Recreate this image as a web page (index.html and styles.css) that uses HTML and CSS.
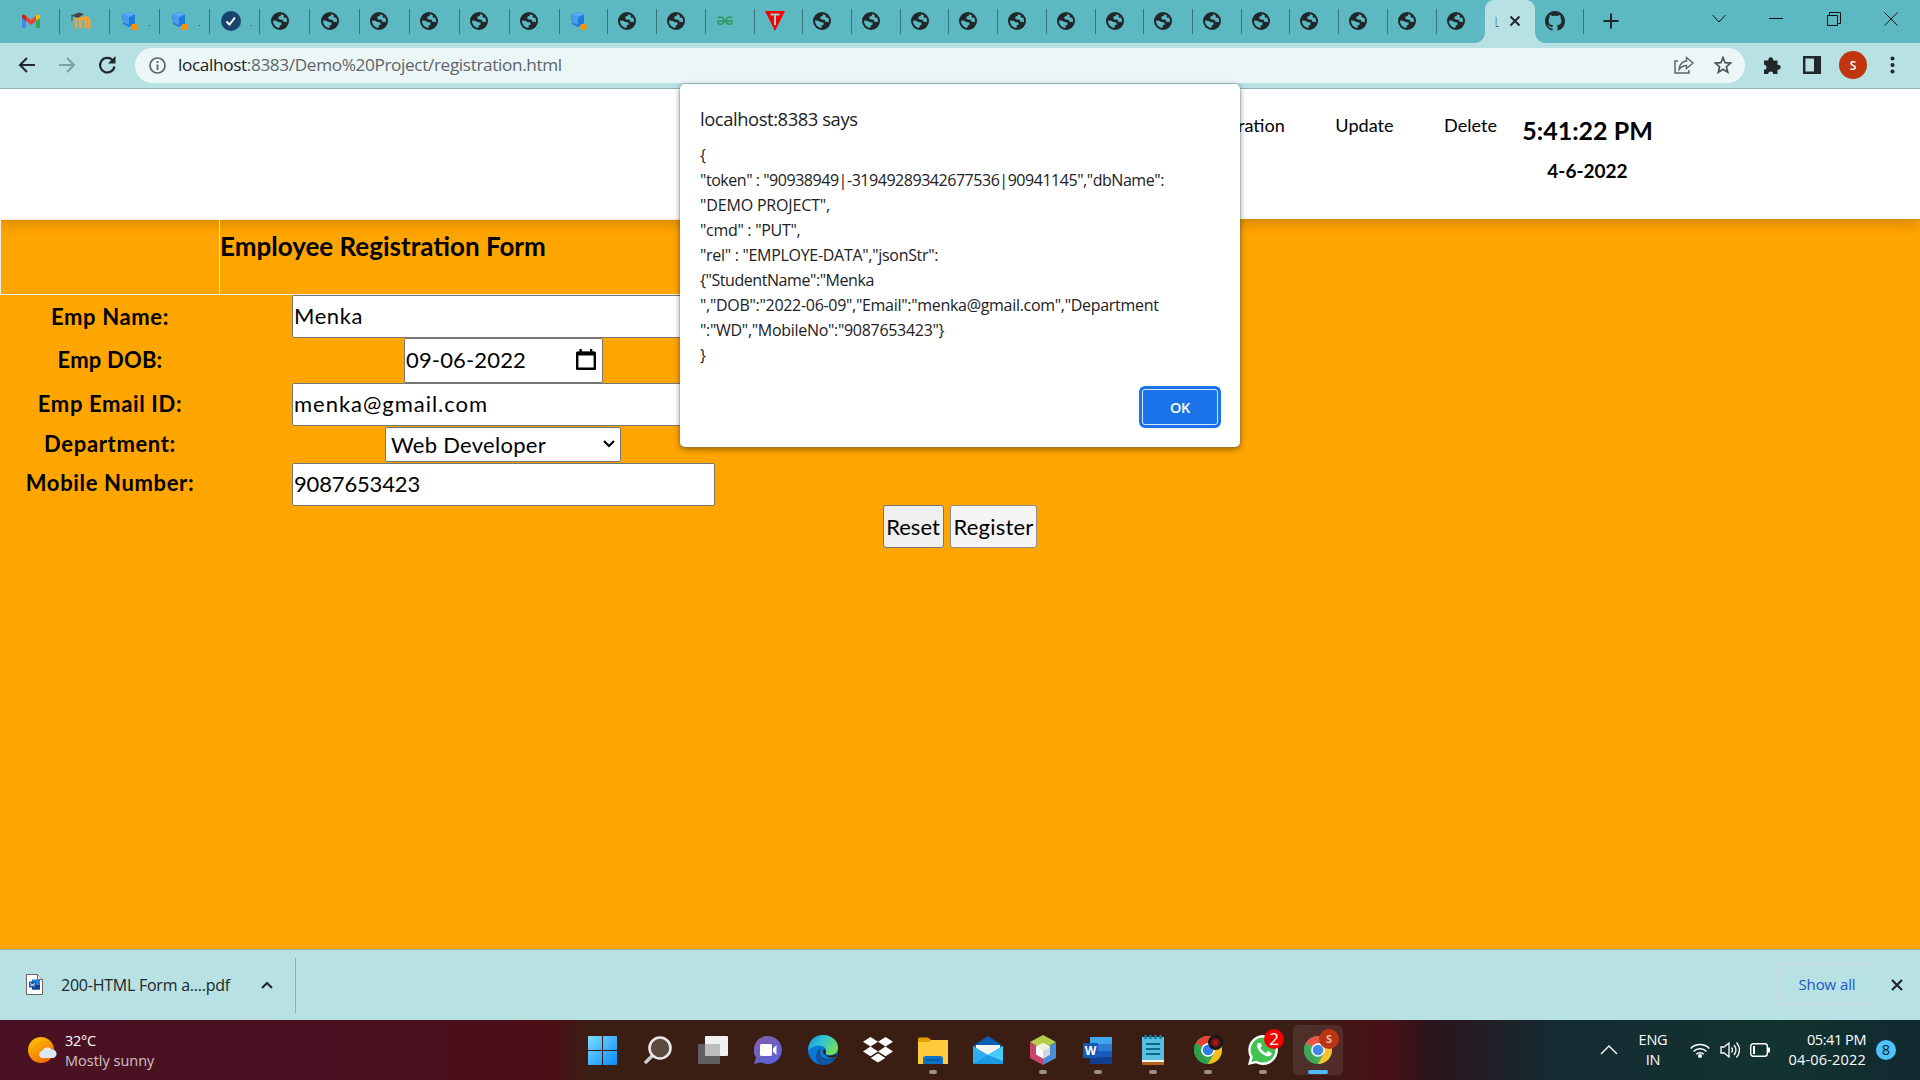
FILE: index.html
```html
<!DOCTYPE html>
<html lang="en">
<head>
<meta charset="utf-8">
<title>Employee Registration Form</title>
<link rel="stylesheet" href="styles.css">
</head>
<body>
<svg class="defs" aria-hidden="true">
  <defs>
    <symbol id="globe" viewBox="0 0 18 18"><circle cx="9" cy="9" r="9" fill="#202629"/><path d="M10.2 2.2 9.6 4 7.6 4.6 7.2 6.8 9 7.4 12 8 12.4 10 14.6 9.8 15.8 10.4A7 7 0 0 0 15 5.2L13.6 6 12.6 4.6 13 3.4A7 7 0 0 0 10.2 2.2ZM2 8.4A7 7 0 0 0 8.4 16L8.8 13.6 10.8 12.6 10.4 10.6 7.4 10 5.4 8.8Z" fill="#5db8c0"/></symbol>
    <symbol id="cube" viewBox="0 0 18 18"><path d="M1 3Q4 .5 7.500.500T14 2.500v9L8 15l-6-3Z" fill="#1c7cdc"/><path d="M1 3Q4 .5 7.500.500T14 2.500L8 5Z" fill="#5aa9f2"/><path d="m1.500 3 6.500 2v8l-6-2.500Z" fill="#4a9bea"/><rect x="10.500" y="12" width="6" height="6" rx="1" fill="#ff9100"/></symbol>
    <symbol id="chrome" viewBox="0 0 28 28"><circle cx="14" cy="14" r="14" fill="#34a853"/><path d="M14 14 1.9 7A14 14 0 0 1 26.1 7Z" fill="#ea4335"/><path d="M14 7h12.1A14 14 0 0 1 14 28l6-10.5Z" fill="#fbbc16"/><path d="m1.9 7 6 10.5L14 28A14 14 0 0 1 1.9 7Z" fill="#2f9e4b"/><circle cx="14" cy="14" r="6.8" fill="#fff"/><circle cx="14" cy="14" r="5.3" fill="#2f7de9"/></symbol>
  </defs>
</svg>

<div class="tabstrip">
  <div class="tab"><svg width="20" height="15" viewBox="0 0 20 15"><path d="M1 2v12h4V6z" fill="#4285f4"/><path d="M15 6v8h4V2z" fill="#34a853"/><path d="M15 1.5V7l4-3V2c0-2-2-2-4-.5z" fill="#fbbc04"/><path d="M5 7V2l5 4 5-4v5l-5 4z" fill="#ea4335"/><path d="M1 2v2l4 3V2C3 0 1 0 1 2z" fill="#c5221f"/></svg></div>
  <div class="tab"><svg width="20" height="18" viewBox="0 0 20 18"><path d="M5 16.500V9c0-3.500 4.500-3.500 4.500 0v7.500m0-7.500c.5-4 5.500-4 5.500 0v7.500m0-7.500" fill="none" stroke="#f9a12e" stroke-width="2.800"/><path d="M14 6c3-1 4.500.5 4.500 3v7.500" fill="none" stroke="#f9a12e" stroke-width="2.400"/><path d="m0 3.500 8-3 5 1.500-6 4z" fill="#444"/><path d="M1 3v6" stroke="#444"/></svg></div>
  <div class="tab dotted"><svg width="18" height="18"><use href="#cube"/></svg></div>
  <div class="tab dotted"><svg width="18" height="18"><use href="#cube"/></svg></div>
  <div class="tab dotted"><svg width="20" height="20" viewBox="0 0 20 20"><circle cx="10" cy="10" r="10" fill="#1b4370"/><path d="m5.5 10.500 3 3 5.500-7" fill="none" stroke="#fff" stroke-width="2"/></svg></div>
  <div class="tab"><svg width="18" height="18"><use href="#globe"/></svg></div>
  <div class="tab"><svg width="18" height="18"><use href="#globe"/></svg></div>
  <div class="tab"><svg width="18" height="18"><use href="#globe"/></svg></div>
  <div class="tab"><svg width="18" height="18"><use href="#globe"/></svg></div>
  <div class="tab"><svg width="18" height="18"><use href="#globe"/></svg></div>
  <div class="tab"><svg width="18" height="18"><use href="#globe"/></svg></div>
  <div class="tab slim"><svg width="18" height="18"><use href="#cube"/></svg></div>
  <div class="tab slim"><svg width="18" height="18"><use href="#globe"/></svg></div>
  <div class="tab slim"><svg width="18" height="18"><use href="#globe"/></svg></div>
  <div class="tab slim"><svg width="18" height="10" viewBox="0 0 18 10"><path d="M1 5h16M2 2c3-2 6 0 6 3S3 10 2 6m14-4c-3-2-6 0-6 3s5 5 6 1" fill="none" stroke="#2f9a5f" stroke-width="1.700"/></svg></div>
  <div class="tab slim"><svg width="20" height="20" viewBox="0 0 20 20"><path d="M0 0h20L10 20Z" fill="#f00"/><path d="M5.500 3.500h9M10 3.500V14" stroke="#8fd0d6" stroke-width="2"/></svg></div>
  <div class="tab slim"><svg width="18" height="18"><use href="#globe"/></svg></div>
  <div class="tab slim"><svg width="18" height="18"><use href="#globe"/></svg></div>
  <div class="tab slim"><svg width="18" height="18"><use href="#globe"/></svg></div>
  <div class="tab slim"><svg width="18" height="18"><use href="#globe"/></svg></div>
  <div class="tab slim"><svg width="18" height="18"><use href="#globe"/></svg></div>
  <div class="tab slim"><svg width="18" height="18"><use href="#globe"/></svg></div>
  <div class="tab slim"><svg width="18" height="18"><use href="#globe"/></svg></div>
  <div class="tab slim"><svg width="18" height="18"><use href="#globe"/></svg></div>
  <div class="tab slim"><svg width="18" height="18"><use href="#globe"/></svg></div>
  <div class="tab slim"><svg width="18" height="18"><use href="#globe"/></svg></div>
  <div class="tab slim"><svg width="18" height="18"><use href="#globe"/></svg></div>
  <div class="tab slim"><svg width="18" height="18"><use href="#globe"/></svg></div>
  <div class="tab slim"><svg width="18" height="18"><use href="#globe"/></svg></div>
  <div class="tab slim last"><svg width="18" height="18"><use href="#globe"/></svg></div>
  <div class="tab-active"><span class="tab-title">L</span><svg width="12" height="12" viewBox="0 0 12 12"><path d="m1.500 1.500 9 9m0-9-9 9" stroke="#202629" stroke-width="2"/></svg></div>
  <div class="tab slim"><svg width="20" height="20" viewBox="0 0 16 16"><path fill="#202b30" d="M8 0C3.580 0 0 3.580 0 8c0 3.540 2.290 6.530 5.470 7.590.4.070.55-.17.55-.38 0-.19-.01-.82-.01-1.490-2.010.37-2.530-.49-2.690-.94-.09-.23-.48-.94-.82-1.130-.28-.15-.68-.52-.01-.53.63-.01 1.080.58 1.230.82.72 1.210 1.870.87 2.330.66.07-.52.28-.87.51-1.070-1.780-.2-3.640-.89-3.640-3.950 0-.87.31-1.590.82-2.150-.08-.2-.36-1.020.08-2.120 0 0 .67-.21 2.200.82.64-.18 1.320-.27 2-.27s1.360.09 2 .27c1.530-1.040 2.200-.82 2.200-.82.44 1.100.16 1.920.08 2.120.51.56.82 1.270.82 2.150 0 3.070-1.870 3.750-3.650 3.950.29.25.54.73.54 1.480 0 1.070-.01 1.930-.01 2.200 0 .21.15.46.55.38A8.010 8.010 0 0 0 16 8c0-4.420-3.580-8-8-8Z"/></svg></div>
  <svg class="newtab" width="16" height="16" viewBox="0 0 16 16"><path d="M8 0.500v15M.5 8h15" stroke="#202629" stroke-width="2"/></svg>
  <div class="wincontrols">
    <svg width="14" height="9" viewBox="0 0 14 9"><path d="m.5 1 6.500 7 6.500-7" fill="none" stroke="#111"/></svg>
    <svg width="14" height="9" viewBox="0 0 14 9"><path d="M0 4.500h14" stroke="#111"/></svg>
    <svg width="14" height="14" viewBox="0 0 14 14"><path d="M.5 3.500h10v10H.5zM2.500 3V.5h11v11H11" fill="none" stroke="#111"/></svg>
    <svg width="14" height="14" viewBox="0 0 14 14"><path d="m.5.5 13 13m0-13-13 13" stroke="#111"/></svg>
  </div>
</div>

<div class="toolbar">
  <svg class="nav" width="40" height="20" viewBox="0 0 40 20"><path d="M28 10H13m7-7-7 7 7 7" fill="none" stroke="#202629" stroke-width="2"/></svg>
  <svg class="nav" width="40" height="20" viewBox="0 0 40 20"><path d="M12 10h15m-7-7 7 7-7 7" fill="none" stroke="#7e9ea2" stroke-width="2"/></svg>
  <svg class="nav" width="40" height="20" viewBox="0 0 40 20"><path d="M27.500 11.500A7.300 7.300 0 1 1 25.500 5" fill="none" stroke="#202629" stroke-width="2.200"/><path d="M28.500 1v7.500H21z" fill="#202629"/></svg>
  <div class="omnibox">
    <svg width="17" height="17" viewBox="0 0 17 17"><circle cx="8.500" cy="8.500" r="7.500" fill="none" stroke="#5f6368" stroke-width="1.700"/><path d="M8.500 7.500V13M8.500 4v2" stroke="#5f6368" stroke-width="1.800"/></svg>
    <span class="url"><b>localhost</b>:8383/Demo%20Project/registration.html</span>
    <svg class="share" width="20" height="18" viewBox="0 0 20 18"><path d="M4 5H1v12h14v-3" fill="none" stroke="#5f6368" stroke-width="1.500"/><path d="M12.500 1.500 19 7l-6.500 5.500V9.500C9 9.500 7 11 5 13.500 5.500 9 8 5.500 12.500 5Z" fill="none" stroke="#5f6368" stroke-width="1.400"/></svg>
    <svg width="18" height="18" viewBox="0 0 18 18"><path d="m9 1.500 2.100 5.200 5.500.4-4.200 3.600 1.300 5.500L9 13.200l-4.700 3 1.300-5.500L1.400 7.100l5.500-.4Z" fill="none" stroke="#4c5257" stroke-width="1.700"/></svg>
  </div>
  <svg class="ext" width="19" height="19" viewBox="0 0 19 19"><path d="M1 4.500h4.500a2.400 2.400 0 1 1 4.500 0h4.500V9a2.400 2.400 0 1 1 0 4.500V18h-4.300a2.500 2.500 0 0 0-5 0H1v-4.300a2.500 2.500 0 0 0 0-5Z" fill="#202629"/></svg>
  <svg class="panel" width="18" height="18" viewBox="0 0 18 18"><path d="M1.200 1.200h15.600v15.600H1.200z" fill="none" stroke="#202629" stroke-width="2.400"/><path d="M11 1h6v16h-6z" fill="#202629"/></svg>
  <span class="avatar">S</span>
  <svg class="dots" width="5" height="18" viewBox="0 0 5 18"><g fill="#202629"><circle cx="2.500" cy="2.500" r="2"/><circle cx="2.500" cy="9" r="2"/><circle cx="2.500" cy="15.500" r="2"/></g></svg>
</div>

<main class="page">
  <header class="site-header">
    <nav class="menu">
      <span>Registration</span>
      <span>Update</span>
      <span>Delete</span>
    </nav>
    <div class="clock">
      <div class="time">5:41:22 PM</div>
      <div class="date">4-6-2022</div>
    </div>
  </header>
  <section class="form">
    <div class="title-row">
      <div class="title-gap"></div>
      <h1>Employee Registration Form</h1>
    </div>
    <div class="row r1"><label>Emp Name:</label><div class="cell"><div class="field wide name">Menka</div></div></div>
    <div class="row r2"><label class="tight">Emp DOB:</label><div class="cell"><div class="field dob"><span>09-06-2022</span><svg width="20" height="21" viewBox="0 0 20 21"><path d="M1.200 4h17.600v15.800H1.200z" fill="none" stroke="#000" stroke-width="2.400" stroke-linejoin="round"/><path d="M1 2.500h18v4H1zM3.500 0h2.300v3H3.500zm10.500 0h2.300v3H14z"/></svg></div></div></div>
    <div class="row r3"><label>Emp Email ID:</label><div class="cell"><div class="field wide email">menka@gmail.com</div></div></div>
    <div class="row r4"><label>Department:</label><div class="cell"><div class="field dept"><span>Web Developer</span><svg width="12" height="8" viewBox="0 0 12 8"><path d="m1 1 5 5 5-5" fill="none" stroke="#000" stroke-width="2.200"/></svg></div></div></div>
    <div class="row r5"><label>Mobile Number:</label><div class="cell"><div class="field wide mobile">9087653423</div></div></div>
    <div class="actions"><button class="reset">Reset</button><button class="register">Register</button></div>
  </section>
</main>

<div class="shelf">
  <svg class="file" width="17" height="21" viewBox="0 0 17 21"><path d="M.5.5h11l5 5v15H.5z" fill="#fff" stroke="#666"/><path d="M11.500.5v5h5" fill="#eee" stroke="#666"/><rect x="6" y="5.500" width="8" height="10" fill="#1b84dd"/><rect x="6" y="11" width="8" height="4.500" fill="#123f8c"/><rect x="3" y="7.500" width="7" height="6" fill="#1c55b0"/><path d="m4.500 9 1 3 1-2 1 2 1-3" fill="none" stroke="#fff" stroke-width=".8"/></svg>
  <span class="filename">200-HTML Form a....pdf</span>
  <svg class="up" width="12" height="8" viewBox="0 0 12 8"><path d="m1 7 5-5 5 5" fill="none" stroke="#202629" stroke-width="2"/></svg>
  <i class="divider"></i>
  <button class="showall">Show all</button>
  <svg width="12" height="12" viewBox="0 0 12 12"><path d="m1 1 10 10M11 1 1 11" stroke="#202629" stroke-width="2.200"/></svg>
</div>

<footer class="taskbar">
  <div class="weather">
    <svg width="29" height="27" viewBox="0 0 29 27"><defs><linearGradient id="sun" x2=".6" y2="1"><stop stop-color="#ffc800"/><stop offset="1" stop-color="#f07000"/></linearGradient></defs><circle cx="13" cy="13" r="13" fill="url(#sun)"/><path d="M14 21a3.600 3.600 0 0 1 0-7 5.500 5.500 0 0 1 9.500-1.500A4.300 4.300 0 0 1 25 21Z" fill="#dce6f5"/></svg>
    <div class="stack"><span class="temp">32°C</span><span class="sky">Mostly sunny</span></div>
  </div>
  <div class="apps">
    <div class="app"><svg width="29" height="29" viewBox="0 0 29 29"><defs><linearGradient id="win" x2="1" y2="1"><stop stop-color="#7ddcff"/><stop offset="1" stop-color="#0a8cff"/></linearGradient></defs><path d="M0 1a1 1 0 0 1 1-1h13v14H0zM15 0h13a1 1 0 0 1 1 1v13H15zM0 15h14v14H1a1 1 0 0 1-1-1zM15 15h14v13a1 1 0 0 1-1 1H15z" fill="url(#win)"/></svg></div>
    <div class="app"><svg width="28" height="28" viewBox="0 0 28 28"><path d="m9 19-7 7" stroke="#ccc" stroke-width="3.400" stroke-linecap="round"/><circle cx="16" cy="12" r="10.500" fill="#5d4a40" stroke="#e8e8e8" stroke-width="2.600"/></svg></div>
    <div class="app"><svg width="30" height="28" viewBox="0 0 30 28"><rect x="7" width="23" height="20" rx="1" fill="#f0f0f0"/><rect y="8" width="22" height="20" rx="1" fill="#606060"/><path d="M7 8h15v12H7z" fill="#bdbdbd"/></svg></div>
    <div class="app"><svg width="28" height="28" viewBox="0 0 28 28"><defs><linearGradient id="chat" x2=".6" y2="1"><stop stop-color="#8860a8"/><stop offset="1" stop-color="#5b62d8"/></linearGradient></defs><path d="M14 0a14 14 0 1 1-7 26.200L0 28l2-6.500A14 14 0 0 1 14 0Z" fill="url(#chat)"/><rect x="6" y="8" width="12" height="12" rx="1.500" fill="#fff"/><path d="M19 12.500 22.500 9v10L19 15.500z" fill="#fff"/></svg></div>
    <div class="app"><svg width="30" height="30" viewBox="0 0 30 30"><defs><linearGradient id="edge" y2=".5"><stop stop-color="#1593dc"/><stop offset=".5" stop-color="#31c4d2"/><stop offset="1" stop-color="#6ce25a"/></linearGradient></defs><circle cx="15" cy="15" r="15" fill="#0a78d4"/><path d="M.5 12C2 4 8 0 15 0c9 0 15 6 15 12.500 0 5-4 7.500-8 7.500-3 0-5-1-4.500-2.500 2-3-1-7-6-7C6 10.500 2 13 .5 16Z" fill="url(#edge)"/><path d="M9 17c0 8 8 12 17 8.500A15 15 0 0 1 15 30C9 29 6 23 9 17Z" fill="#0c52a0"/><path d="M13 14c-3 4 0 10 7 10 3 0 6-.5 8-2.500L26.500 25c-9 3-17 0-17.500-8 .5-2 2-3 4-3Z" fill="#124a8c"/><path d="M18 20c-2 0-4-3-2-6 2 1 2.500 3 1.500 4.500C17.500 20 20 21 23 20.500l6-1.500-1 3c-4 1.500-8 1-10-2Z" fill="#3a1e14"/></svg></div>
    <div class="app"><svg width="30" height="26" viewBox="0 0 30 26"><path d="m7.500 0 7.500 4.800-7.500 4.800L0 4.800ZM22.500 0 30 4.800l-7.500 4.800L15 4.800ZM7.500 9.600l7.500 4.800-7.500 4.800L0 14.400ZM22.500 9.600l7.500 4.800-7.500 4.800-7.500-4.800ZM15 16.200l7.300 4.700L15 25.600l-7.300-4.700Z" fill="#fff"/></svg></div>
    <div class="app run"><svg width="30" height="27" viewBox="0 0 30 27"><path d="M0 2a1.500 1.500 0 0 1 1.500-1.500H10L13 3v4H0z" fill="#e0a000"/><path d="M0 5h11l2-2h17v24H0z" fill="#ffcb3d"/><path d="M5 27v-5a3 3 0 0 1 3-3h14a3 3 0 0 1 3 3v5z" fill="#0b74c8"/><path d="M8 23h14" stroke="#054a85" stroke-width="1.200"/></svg></div>
    <div class="app"><svg width="30" height="28" viewBox="0 0 30 28"><path d="m0 10 15-10 15 10v6H0z" fill="#0a5db4"/><path d="M3 9h24v8L15 20 3 17z" fill="#f3f3f3"/><path d="M0 10v17a1 1 0 0 0 1 1h28a1 1 0 0 0 1-1V10L15 19Z" fill="#2caef0"/><path d="m0 28 30-18v17a1 1 0 0 1-1 1z" fill="#1c98e4"/><path d="m15 19 15-9v15z" fill="#45cdf8"/></svg></div>
    <div class="app run"><svg width="26" height="30" viewBox="0 0 26 30"><path d="m13 0 13 7-13 8L0 7Z" fill="#b6cc4c"/><path d="M0 7v16l13 7V15Z" fill="#c8446a"/><path d="M26 7v16l-13 7V15Z" fill="#4a8ed8"/><path d="m13 8 7 3.700v7.800L13 23.500l-7-4v-7.800Z" fill="#fff"/><path d="M20 11.700v7.800L13 23.500V16Z" fill="#cfd8e4"/><path d="m13 8 7 3.700L13 16l-7-4.300Z" fill="#eef2dc"/></svg></div>
    <div class="app run"><svg width="29" height="27" viewBox="0 0 29 27"><path d="M7 0h22v7H7z" fill="#41a5ee"/><path d="M7 7h22v7H7z" fill="#2b7cd3"/><path d="M7 14h22v6H7z" fill="#185abd"/><path d="M7 20h22v7H7z" fill="#103f91"/><rect y="6" width="15" height="15" rx="1" fill="#1857b5"/><text x="7.500" y="17.500" class="word-mark">W</text></svg></div>
    <div class="app run"><svg width="22" height="30" viewBox="0 0 22 30"><path d="M0 26h22v3a1 1 0 0 1-1 1H1a1 1 0 0 1-1-1z" fill="#b5651d"/><path d="M0 24h22v3H0z" fill="#f4f4f4"/><path d="M0 2h22v23H0z" fill="#56c0de"/><path d="M4 9h14M4 14h14M4 19h14" stroke="#0b6a8c" stroke-width="1.800"/><path d="M3.500 0v4M8.500 0v4M13.500 0v4M18.500 0v4" stroke="#0d7da5" stroke-width="2.400"/></svg></div>
    <div class="app run"><svg width="28" height="28"><use href="#chrome"/></svg><i class="badge dark"></i></div>
    <div class="app run"><svg width="30" height="30" viewBox="0 0 30 30"><path d="M15 0a15 15 0 1 1-7 28.300L0 30l2-8A15 15 0 0 1 15 0Z" fill="#fff"/><path d="M15 2.500a12.500 12.500 0 1 1-6.500 23.200L3.500 27l1.300-5A12.500 12.500 0 0 1 15 2.500Z" fill="#40c351"/><path d="M10 8c-4 5 6 15 12 13 2-1 2-3 1-3.500l-3-1.500-2 2c-2-.5-5-3.500-5.500-5.500l1.500-1.500L12.500 8Z" fill="#fff"/></svg><i class="badge count">2</i></div>
    <div class="app run current"><svg width="28" height="28"><use href="#chrome"/></svg><i class="badge profile">S</i></div>
  </div>
  <div class="tray">
    <svg width="18" height="10" viewBox="0 0 18 10"><path d="m1 9 8-8 8 8" fill="none" stroke="#fff" stroke-width="1.300"/></svg>
    <div class="lang"><span>ENG</span><span>IN</span></div>
    <svg width="20" height="16" viewBox="0 0 20 16"><g fill="none" stroke="#fff" stroke-width="1.500"><path d="M.7 6.500a13 13 0 0 1 18.600 0M3.500 9.500a9.200 9.200 0 0 1 13 0M6.300 12.300a5.200 5.200 0 0 1 7.400 0"/></g><circle cx="10" cy="14" r="2" fill="#fff"/></svg>
    <svg class="sound" width="20" height="18" viewBox="0 0 20 18"><path d="M1 6h3l5-4v14l-5-4H1zM11.500 6.500q2 2.500 0 5M14 4q4 5 0 10M16.500 1.500q6 7.500 0 15" fill="none" stroke="#fff" stroke-width="1.300"/></svg>
    <svg width="20" height="14" viewBox="0 0 20 14"><rect x=".7" y=".7" width="16.600" height="12.600" rx="2.500" fill="none" stroke="#fff" stroke-width="1.400"/><path d="M3 3h2v8H3zM18 4.500h2v5h-2z" fill="#fff"/></svg>
    <div class="datetime"><span class="now">05:41 PM</span><span class="today">04-06-2022</span></div>
    <span class="notif">8</span>
  </div>
</footer>

<div class="dialog" role="alertdialog">
  <h2>localhost:8383 says</h2>
  <p>{</p>
  <p class="token">"token" : "90938949|-31949289342677536|90941145","dbName":</p>
  <p class="project">"DEMO PROJECT",</p>
  <p>"cmd" : "PUT",</p>
  <p>"rel" : "EMPLOYE-DATA","jsonStr":</p>
  <p class="student">{"StudentName":"Menka</p>
  <p>","DOB":"2022-06-09","Email":"menka@gmail.com","Department</p>
  <p>":"WD","MobileNo":"9087653423"}</p>
  <p>}</p>
  <button class="ok">OK</button>
</div>
</body>
</html>
```
FILE: styles.css
```css
* { box-sizing: border-box; }
body { margin: 0; width: 1920px; height: 1080px; overflow: hidden; position: relative; display: flex; flex-direction: column; font-family: "Open Sans", "Noto Sans", sans-serif; background: #ffa500; }
svg { display: block; flex: none; }
button { font: inherit; letter-spacing: inherit; padding: 0; margin: 0; }
.defs { position: absolute; width: 0; height: 0; }
span, p { white-space: pre; }

/* Tab strip */
.tabstrip { height: 43px; flex: none; background: #5cb8c1; display: flex; padding-left: 10.4px; }
.tab { width: 49.95px; flex: none; height: 25px; margin-top: 9px; border-right: 1px solid #3a7379; display: flex; align-items: center; padding: 0 0 1px 10.5px; }
.tab.slim { width: 48.73px; padding-left: 10px; }
.tab.last { border: 0; }
.dotted::after { content: ""; width: 1px; height: 1px; background: #245055; margin: 8px 0 0 10px; }
.tab-active { width: 50px; flex: none; background: #b8e1e4; border-radius: 9px 9px 0 0; display: flex; align-items: center; padding: 0 0 1px 10px; position: relative; }
.tab-active::before, .tab-active::after { content: ""; position: absolute; bottom: 0; width: 10px; height: 10px; }
.tab-active::before { left: -10px; background: radial-gradient(circle at 0 0, transparent 9.500px, #b8e1e4 10px); }
.tab-active::after { right: -10px; background: radial-gradient(circle at 100% 0, transparent 9.500px, #b8e1e4 10px); }
.tab-title { width: 14px; font-size: 14px; color: #4b6a6e; transform: scaleX(.55); transform-origin: left; }
.newtab { margin: 13px 0 0 19px; }
.wincontrols { margin-left: auto; width: 186px; height: 37px; display: flex; justify-content: space-between; align-items: center; margin-right: 22px; }

/* Address bar */
.toolbar { height: 46px; flex: none; background: #b8e1e4; border-bottom: 1px solid #8fb3b8; display: flex; align-items: center; padding: 0 0 1px 7px; }
.nav { width: 40px; }
.omnibox { width: 1610px; height: 35px; border-radius: 18px; background: #ebf7f7; margin-left: 8px; display: flex; align-items: center; padding: 0 13px 0 14px; }
.url { font-size: 17.2px; letter-spacing: -.36px; color: #5f6368; margin-left: 12px; line-height: 30px; }
.url b { font-weight: 400; color: #202124; }
.share { margin: 0 20px 0 auto; }
.ext { margin-left: 18px; }
.panel { margin-left: 21px; }
.avatar { width: 28px; height: 28px; margin-left: 18px; border-radius: 50%; background: #c1360f; color: #fff; font-size: 12px; font-weight: 600; display: grid; place-items: center; }
.dots { margin-left: 23px; }

/* Page */
.page { flex: none; height: 861px; background: #ffa500; overflow: hidden; }
.site-header { height: 130px; background: #fff; display: flex; justify-content: flex-end; padding-right: 267px; box-shadow: 0 2px 14px rgba(120, 70, 0, .45); font-family: Lato, "Noto Sans", sans-serif; color: #000; }
.menu { display: flex; font-size: 18.1px; line-height: 24px; padding-top: 24px; gap: 50.5px; margin-right: 25px; }
.clock { text-align: center; font-weight: 700; width: 131px; line-height: 30px; }
.time { font-size: 25px; padding-top: 26px; height: 67px; }
.date { font-size: 19px; }

.form { font-family: Lato, "Noto Sans", sans-serif; font-size: 22px; color: #000; }
.title-row { display: flex; width: 960px; height: 76px; border: 1px solid #f3eee4; }
.title-gap { width: 219px; border-right: 1px solid #f3eee4; }
h1 { margin: 0; font-size: 26px; line-height: 30px; padding-top: 11px; white-space: nowrap; }
.row { display: flex; align-items: center; }
.row label { width: 220px; text-align: center; font-weight: 700; letter-spacing: .65px; padding-bottom: 1px; }
.row label.tight { letter-spacing: .2px; padding-bottom: 2px; }
.cell { width: 567px; display: flex; justify-content: center; }
.r1 { height: 43px; }
.r2 { height: 45px; }
.r3 { height: 43px; }
.r4 { height: 37px; }
.r5 { height: 42px; }
.r3 label, .r4 label, .r5 label { padding-bottom: 3px; }
.field { background: #fff; border: 1px solid #767676; border-radius: 2px; display: flex; align-items: center; padding: 0 0 2px 1px; }
.wide { width: 423px; height: 43px; }
.name { letter-spacing: .58px; }
.email { letter-spacing: .97px; }
.mobile { letter-spacing: -.16px; }
.dob { width: 199px; height: 45px; justify-content: space-between; padding-right: 6px; letter-spacing: .16px; }
.dept { width: 236px; height: 35px; justify-content: space-between; padding: 0 5px 1px 5px; letter-spacing: .28px; margin-right: 1px; }
.actions { display: flex; justify-content: center; gap: 6px; height: 43px; }
.actions button { border: 1px solid #767676; border-radius: 3px; background: #efefef; height: 43px; color: #000; padding-bottom: 1px; }
.actions .reset { width: 61px; padding-right: 1px; }
.actions .register { width: 87px; background: #f5f5f5; border-color: #8d8d8d; letter-spacing: .2px; }

/* Download shelf */
.shelf { height: 70px; flex: none; background: #b8e1e4; box-shadow: 0 -1px #8fb3a8; display: flex; align-items: center; padding: 0 17px 0 26px; position: relative; }
.file { margin-bottom: 2px; }
.filename { font-size: 16px; letter-spacing: -.24px; color: #202629; margin-left: 18px; width: 169px; }
.up { margin-left: 31px; }
.divider { width: 1px; height: 55px; background: #87aeb2; margin-left: 22px; }
.showall { margin-left: auto; width: 98px; height: 40px; margin: 0 15px 2px auto; background: none; border: 1px solid #d3d9df; border-radius: 5px; font-size: 15px; letter-spacing: -.1px; color: #1a56c4; }

/* Taskbar */
.taskbar { height: 60px; flex: none; color: #fff; font-size: 14.5px; line-height: 20px; display: flex; align-items: center; background: linear-gradient(90deg, #4a1122 0, #4a1020 400px, #4c0f16 550px, #3a1e14 590px, #3a1e14 1290px, #4a1018 1385px, #2c151b 1430px, #142b33 1560px, #12332f 1780px, #112930 1920px); }
.weather { display: flex; align-items: center; padding-left: 28px; gap: 8px; width: 575px; }
.stack { display: flex; flex-direction: column; padding-top: 1px; }
.temp { letter-spacing: -.3px; }
.sky { color: #cfc2c6; }
.apps { display: flex; }
.app { width: 55px; height: 60px; display: grid; place-items: center; position: relative; }
.run::after { content: ""; position: absolute; left: 23.500px; bottom: 6px; width: 8px; height: 4px; border-radius: 2px; background: #9b8f8b; }
.current::before { content: ""; position: absolute; inset: 5px 2.500px; border-radius: 5px; background: rgba(255, 255, 255, .09); }
.current::after { left: 17.500px; width: 20px; background: #4cbcff; }
.badge { position: absolute; top: 9px; right: 6px; width: 20px; height: 20px; border-radius: 50%; font-style: normal; display: grid; place-items: center; }
.dark { width: 15px; height: 15px; top: 15px; right: 12px; background: radial-gradient(circle, #b01818 15%, #151515 55%); }
.count { background: #f60000; font-size: 17px; }
.profile { background: #bb3510; color: #e6b9ad; font-size: 11px; font-weight: 700; }
.word-mark { fill: #fff; font-size: 12px; font-weight: 700; text-anchor: middle; }
.tray { margin-left: auto; display: flex; align-items: center; padding-right: 24px; }
.lang { display: flex; flex-direction: column; align-items: center; width: 30px; margin: 0 22px 0 20px; letter-spacing: -.18px; }
.sound { margin: 0 10px; }
.datetime { display: flex; flex-direction: column; align-items: flex-end; width: 78px; margin-left: 18px; }
.now { letter-spacing: -.44px; }
.today { letter-spacing: .18px; }
.notif { width: 20px; height: 20px; border-radius: 50%; background: #4cc2ff; color: #10222c; display: grid; place-items: center; margin-left: 10px; }

/* Alert */
.dialog { position: absolute; left: 680px; top: 84px; width: 560px; height: 363px; background: #fff; border-radius: 5px; box-shadow: 0 0 0 1px rgba(100, 120, 120, .25), 0 2px 6px rgba(0, 0, 0, .45); padding: 20px 19px 20px 20px; font-size: 16px; letter-spacing: -.3px; color: #202124; }
.dialog h2 { margin: 0 0 9px; font-size: 18.4px; letter-spacing: -.43px; font-weight: 400; line-height: 30px; }
.dialog p { margin: 0; line-height: 25px; height: 25px; }
.dialog .token { letter-spacing: -.46px; }
.dialog .project { letter-spacing: -.16px; }
.dialog .student { letter-spacing: -.44px; }
.ok { display: block; margin: 18px 0 0 auto; width: 82px; height: 42px; border: 3px solid #1a73e8; border-radius: 6px; background: #1a73e8; box-shadow: inset 0 0 0 1px #d8e8fc; color: #fff; font-size: 14.5px; font-weight: 600; }
```
